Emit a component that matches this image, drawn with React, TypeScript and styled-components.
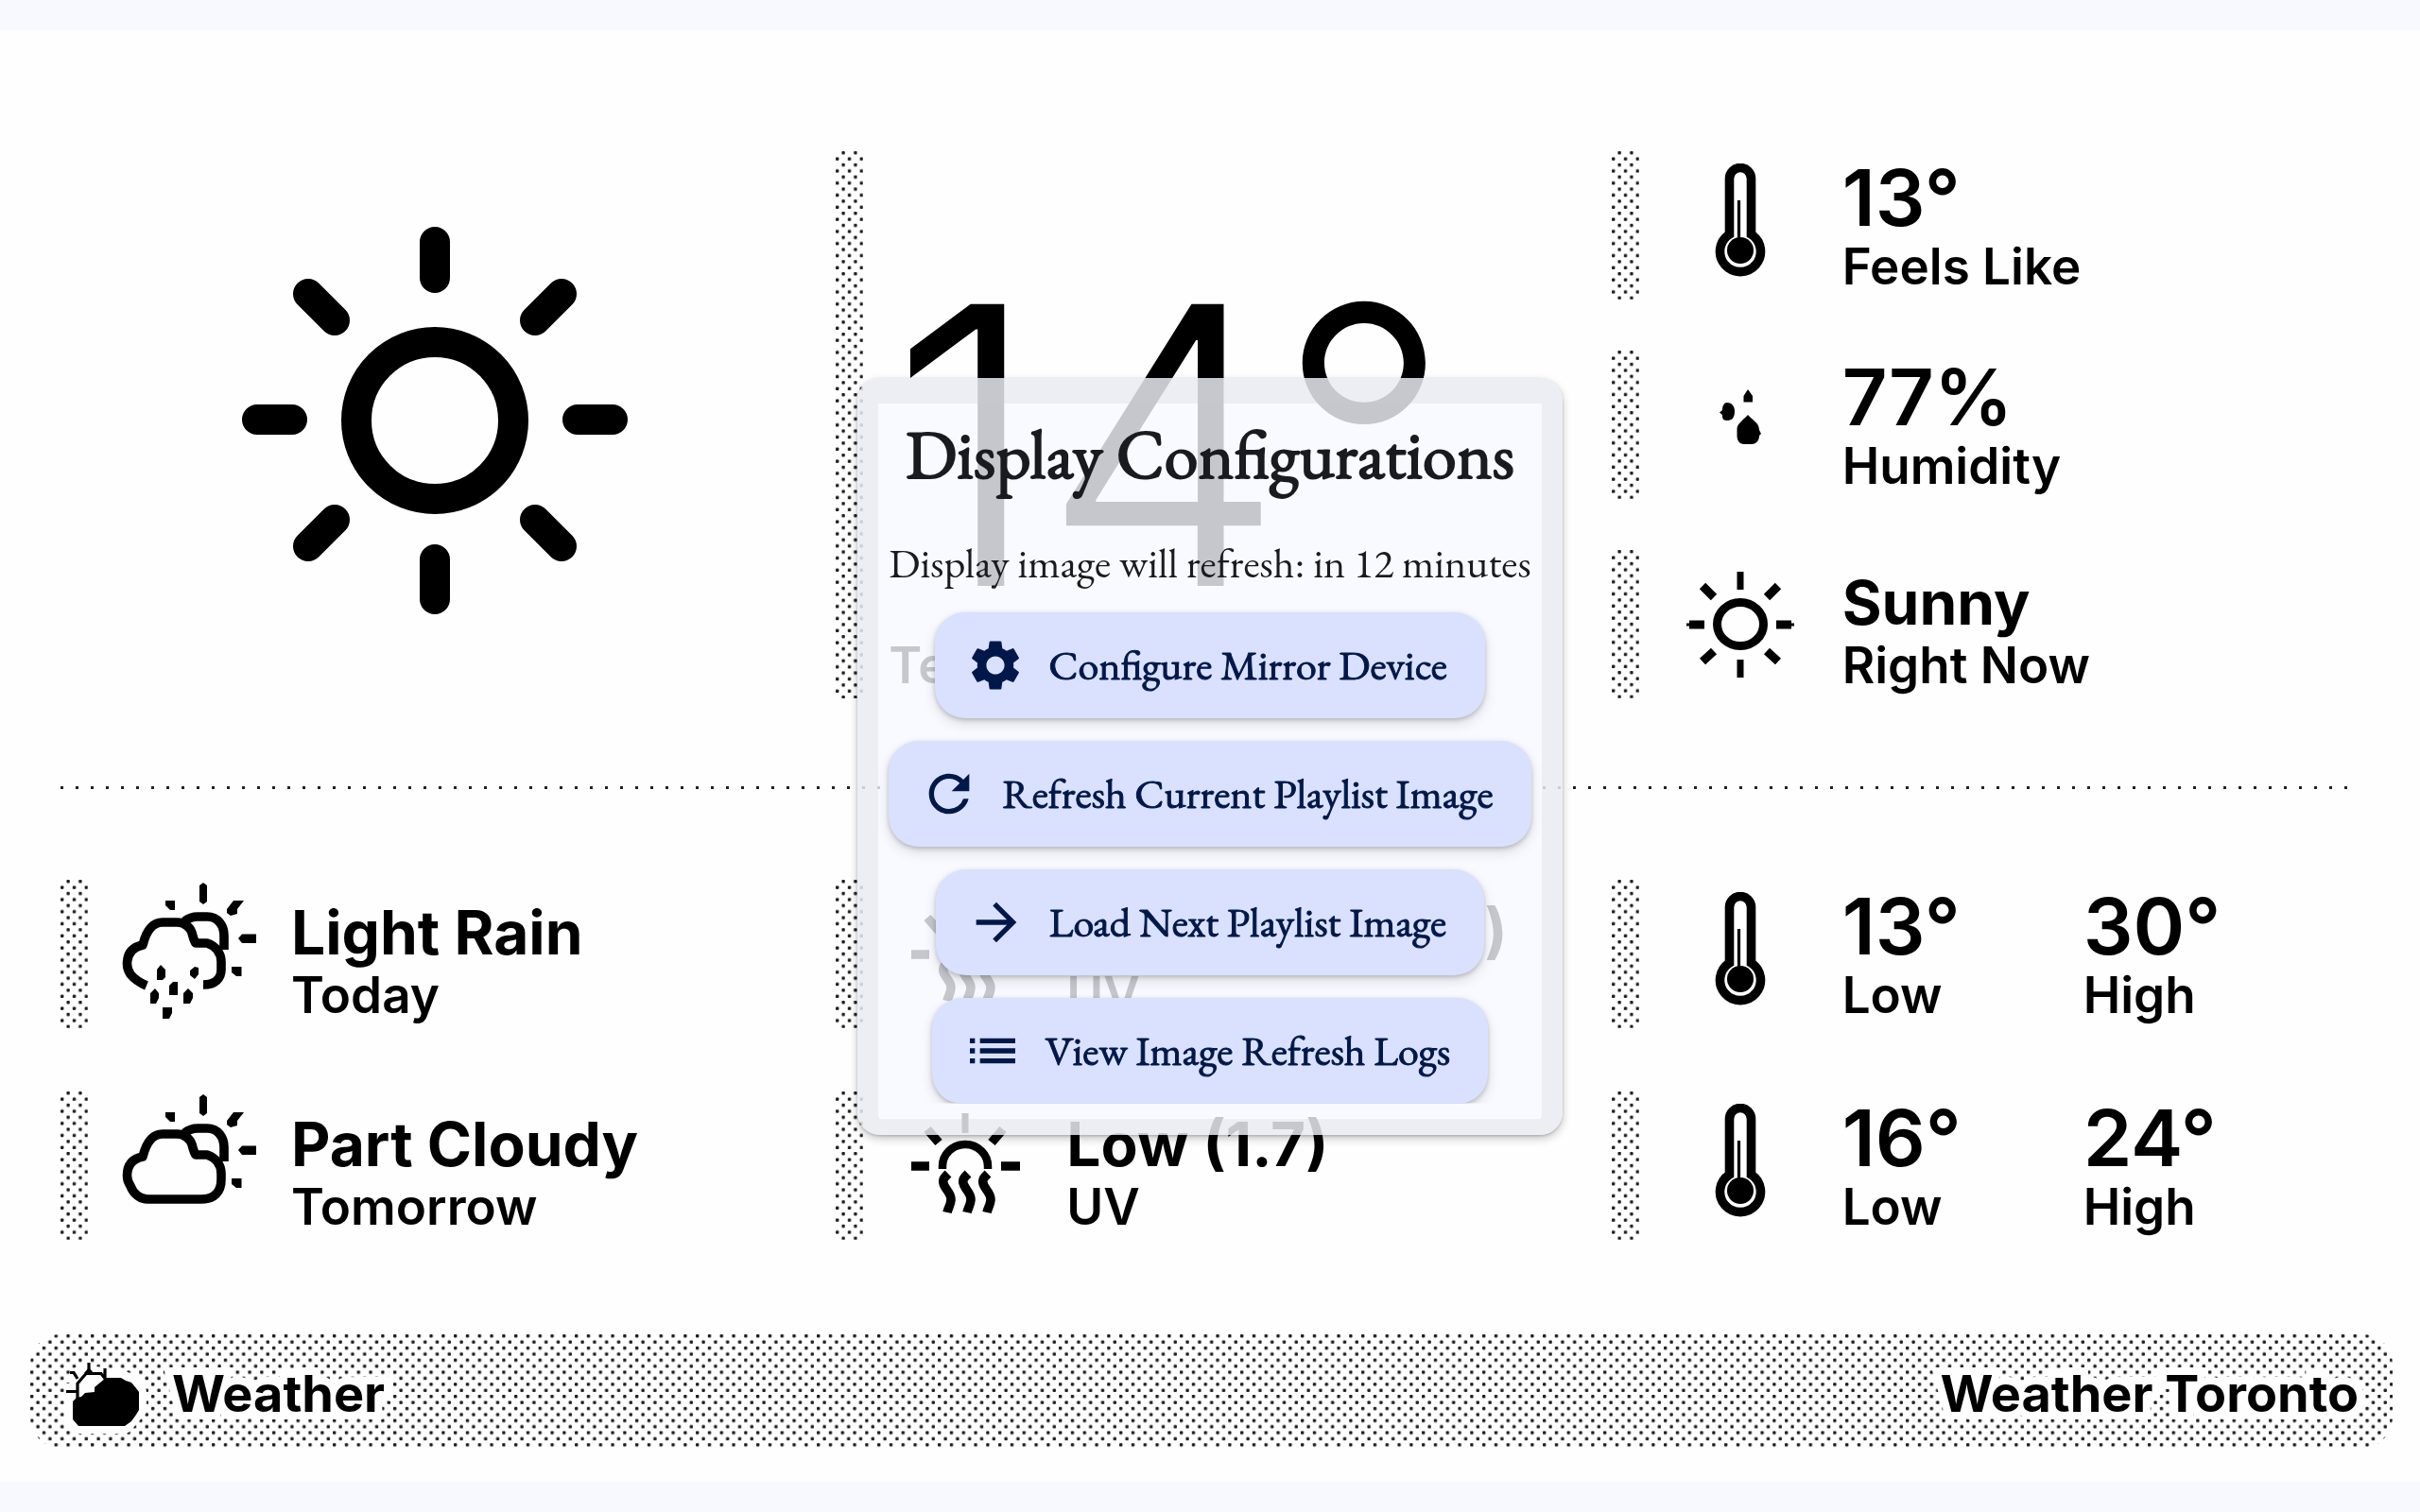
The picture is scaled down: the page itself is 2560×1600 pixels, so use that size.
import React, { useId } from "react";
import styled, { createGlobalStyle } from "styled-components";
import { MdSettings, MdRefresh, MdArrowForward, MdList } from "react-icons/md";

const GlobalStyle = createGlobalStyle`
  * { box-sizing: border-box; }
  body {
    margin: 0;
    background: #f8f9ff;
    color: #000;
    font-family: Inter, "Liberation Sans", sans-serif;
  }
`;

const Page = styled.div`
  min-height: 100vh;
  padding: 32px 0;
  display: flex;
  flex-direction: column;
`;

const Screen = styled.main`
  flex: 1;
  display: flex;
  flex-direction: column;
  padding: 128px 29px 36px 32px;
  background: #fefefe;
`;

const Columns = styled.section`
  display: grid;
  grid-template-columns: repeat(3, minmax(0, 1fr));
  column-gap: 29px;
  margin: 0 35px 0 32px;
`;

const Stack = styled.div<{ $gap: number }>`
  display: flex;
  flex-direction: column;
  gap: ${(p) => p.$gap}px;
`;

const Hero = styled.div`
  display: flex;
  align-items: center;
  justify-content: center;
  padding-bottom: 10px;
`;

const Item = styled.div`
  display: grid;
  grid-template-columns: 29px 215px 1fr;
  min-height: 157px;
`;

const BigItem = styled.div`
  display: grid;
  grid-template-columns: 29px 1fr;
  column-gap: 27px;
`;

const IconCell = styled.div`
  display: flex;
  align-items: center;
  justify-content: center;
`;

const Readings = styled.div`
  display: flex;
`;

const Reading = styled.div<{ $min?: number }>`
  display: flex;
  flex-direction: column;
  justify-content: flex-end;
  min-width: ${(p) => p.$min ?? 0}px;
  padding-bottom: 3px;
  white-space: nowrap;
`;

const Value = styled.span<{ $size: "medium" | "large" }>`
  font-size: ${(p) => (p.$size === "large" ? 83 : 64)}px;
  line-height: ${(p) => (p.$size === "large" ? 82 : 68)}px;
  font-weight: ${(p) => (p.$size === "large" ? 600 : 700)};
`;

const Temperature = styled.span`
  font-size: 410px;
  line-height: 402px;
  font-weight: 300;
`;

const Label = styled.span`
  font-size: 53px;
  line-height: 64px;
  font-weight: 600;
`;

const DottedRule = styled.hr`
  width: auto;
  height: 3px;
  margin: 93px 35px 96px 32px;
  border: 0;
  background: linear-gradient(90deg, #222 3px, transparent 3px) 0 0 / 16px 3px;
`;

const TitleBar = styled.footer`
  display: grid;
  grid-template-rows: 120px;
  margin-top: auto;
  border-radius: 32px;
  overflow: hidden;
  & > * { grid-area: 1 / 1; }
`;

const TitleContent = styled.div`
  display: flex;
  align-items: center;
  gap: 34px;
  padding: 6px 36px 0 38px;
`;

const Title = styled.span<{ $end?: boolean }>`
  margin-left: ${(p) => (p.$end ? "auto" : "0")};
  font-size: 54px;
  line-height: 64px;
  font-weight: 700;
  -webkit-text-stroke: 16px #fefefe;
  paint-order: stroke fill;
`;

const Texture = styled.svg`
  display: block;
  width: 100%;
  height: 100%;
  min-height: 0;
`;

const Overlay = styled.div`
  position: fixed;
  inset: 0;
  display: flex;
  align-items: center;
  justify-content: center;
`;

const Dialog = styled.div`
  display: flex;
  flex-direction: column;
  align-items: center;
  padding: 13px 11px 16px;
  border: solid rgba(234, 235, 241, 0.85);
  border-width: 27px 22px 17px;
  border-radius: 24px;
  background: rgba(248, 249, 255, 0.8);
  background-clip: padding-box;
  box-shadow: 0 4px 10px rgba(0, 0, 0, 0.22), 0 1px 3px rgba(0, 0, 0, 0.2);
  color: #1a1b20;
  font-family: "EB Garamond", "Liberation Serif", serif;
`;

const Heading = styled.h1`
  margin: 0;
  font-size: 72px;
  line-height: 80px;
  font-weight: 400;
  -webkit-text-stroke: 2px currentColor;
`;

const Notice = styled.p`
  margin: 47px 0 23px;
  font-size: 44px;
  line-height: 58px;
`;

const Actions = styled.div`
  display: flex;
  flex-direction: column;
  align-items: center;
  align-self: stretch;
  gap: 24px;
  clip-path: inset(-20px -20px 0);
`;

const ActionButton = styled.button`
  display: flex;
  align-items: center;
  gap: 24px;
  height: 112px;
  padding: 0 40px 0 32px;
  border: 0;
  border-radius: 32px;
  background: #dae1ff;
  color: #001849;
  font: inherit;
  font-size: 44px;
  line-height: 56px;
  white-space: nowrap;
  -webkit-text-stroke: 1px currentColor;
  box-shadow: 0 2px 5px rgba(0, 0, 0, 0.2), 0 6px 14px rgba(0, 0, 0, 0.12);
  cursor: pointer;
  & svg { stroke: none; }
`;

function Dither({ shifted = false }: { shifted?: boolean }) {
  const id = useId();
  const a = shifted ? 6.4 : 0;
  const b = shifted ? 0 : 6.4;
  return (
    <Texture aria-hidden="true">
      <defs>
        <pattern id={id} width="12.8" height="12.8" patternUnits="userSpaceOnUse">
          <rect x={a} y="0" width="3.400" height="3.400" rx="1" fill="#1c1c1c" />
          <rect x={b} y="6.400" width="3.400" height="3.400" rx="1" fill="#1c1c1c" />
        </pattern>
      </defs>
      <rect width="100%" height="100%" fill={`url(#${id})`} />
    </Texture>
  );
}

const SunLarge = () => (
  <svg width="410" height="410" viewBox="0 0 410 410" fill="none" stroke="#000" strokeWidth="32" strokeLinecap="round" aria-hidden="true">
    <circle cx="205" cy="205" r="83" />
    <path d="M205 16V54M205 352V394M17 204H54M356 204H393M71 71L99 99M339 71L311 99M71 338L99 310M339 338L311 310" />
  </svg>
);

const SunSmall = () => (
  <svg width="128" height="128" viewBox="0 0 128 128" fill="none" stroke="#000" strokeWidth="9" aria-hidden="true">
    <ellipse cx="64" cy="63.500" rx="24.500" ry="23" />
    <path d="M64 8V27M64 101V120" strokeWidth="7" />
    <path d="M10 64H26M102 64H118M24 23L36 35M104 23L92 35M24 103L36 92M104 103L92 92" />
    <path d="M7 64H12M116 64H121" strokeWidth="3" />
  </svg>
);

const Thermometer = () => (
  <svg width="64" height="132" viewBox="-6 0 64 132" aria-hidden="true">
    <path d="M14.500 75V16A11.500 11.500 0 0 1 37.500 16V75A21.500 21.500 0 1 1 14.500 75Z" fill="none" stroke="#000" strokeWidth="9.600" />
    <path d="M24.500 39V82" stroke="#000" strokeWidth="3.200" />
    <circle cx="26" cy="92" r="14" />
  </svg>
);

const Droplets = () => (
  <svg width="128" height="128" viewBox="0 0 128 128" aria-hidden="true">
    <path d="M72 26L77 33V39.500H67.500V33Z" />
    <path d="M50 40C55 40 58 44 58 49C58 55 56 59 50 59C45 59 45 56 45 53L42 50.500L45 48C45 43 47 40 50 40Z" />
    <path d="M72 53C76 58 84 61 84 69L86 73L84 75C84 81 80 84 76 84H68C63 84 60.500 80 60.500 75V68C60.500 62 68 58 72 53Z" />
  </svg>
);

const cloudLeft = "C7 94 5.500 91 5.500 86C5.500 74 12 68 22 66C25 54 31 42 43 42H58C66 42 72 47 74 53C75 57 76 61 78 64H90C99 67 105 74 105 84";

const CloudSun = ({ rain = false }: { rain?: boolean }) => (
  <svg width="144" height="152" viewBox="0 0 144 152" aria-hidden="true">
    <g fill="none" stroke="#000" strokeWidth="9.600" strokeLinejoin="round">
      <path d={rain ? `M26 109C19 106 13 102 9 97${cloudLeft}V92C105 101 99 108 86 108` : `M9 97${cloudLeft}V90C105 103 98 111 84 111H27C19 111 12 105 9 97Z`} />
      <path d="M66 41C70 38 74 36 80 36H90C102 36 108 46 108 56V71" />
    </g>
    <path d="M82 3L86 0L90 3V20L86 23L82 20Z" />
    <path d="M46 19H56V29H51L46 24Z" />
    <path d="M111 28L118 19H129L122 28V33L115 35L111 32Z" />
    <path d="M123 59L127 54.500H142V64H127Z" />
    <path d="M116 89H126.500V99H121L116 95Z" />
    {rain && (
      <path d="M37 92L41 87L46 92V100L43 103H37ZM72 93L77 89L81 90V97L77 102L72 98ZM50 109L54 105H59V119H50ZM30 117L35 112L39 117V122L36 128H30ZM65 117L70 112L75 117V122L72 128H65ZM43 132H53V138L50 144H43Z" />
    )}
  </svg>
);

const UvIcon = () => (
  <svg width="128" height="128" viewBox="0 0 128 128" fill="none" stroke="#000" strokeWidth="9.600" aria-hidden="true">
    <path d="M64 8V29" strokeWidth="7" />
    <path d="M24 25L36 39M104 25L92 39M7 64H26M102 64H122" />
    <path d="M40 67V64C40 52 50 41 64 41C78 41 88 52 88 64V67" strokeWidth="8.500" />
    <path d="M46 72C42 76 40 78 41 82C42 88 49 92 49 99C49 105 46 108 45 113M67 72C63 76 61 78 62 82C63 88 70 92 70 99C70 105 67 108 66 113M88 72C84 76 82 78 83 82C84 88 91 92 91 99C91 105 88 108 87 113" />
  </svg>
);

const WeatherBadge = () => (
  <svg width="78" height="67" viewBox="0 0 78 67" overflow="visible" aria-hidden="true">
    <path d="M7 41L12 21L21 11L40 13L58 16L72 21L77 31V50L62 67H13L7 60ZM24 0V10M4 11L12 18M41 6V16M0 30H12" fill="#fefefe" stroke="#fefefe" strokeWidth="16" strokeLinejoin="round" />
    <path d="M7 41L11 37L16 36L20 32L30 31V26L42 16H58L63 19L69 21L74 27L77 31V50L74 55L69 62L62 67H13L7 60Z" />
    <path d="M12 41V22L21 11.500H37L42 18M24 0V11M4 10.500H8L12 17M41 6V16M0 30.500H12" fill="none" stroke="#000" strokeWidth="3.200" />
    <path d="M19 11L24 5L29 11Z" />
  </svg>
);

type Entry = { value: string; label: string; size?: "medium" | "large" };

function Metric({ icon, entries }: { icon: React.ReactNode; entries: Entry[] }) {
  return (
    <Item>
      <Dither shifted />
      <IconCell>{icon}</IconCell>
      <Readings>
        {entries.map((e) => (
          <Reading key={e.label} $min={entries.length > 1 ? 255 : 0}>
            <Value $size={e.size ?? "medium"}>{e.value}</Value>
            <Label>{e.label}</Label>
          </Reading>
        ))}
      </Readings>
    </Item>
  );
}

const range = (low: string, high: string): Entry[] => [
  { value: low, label: "Low", size: "large" },
  { value: high, label: "High", size: "large" },
];

const actions = [
  { text: "Configure Mirror Device", Icon: MdSettings },
  { text: "Refresh Current Playlist Image", Icon: MdRefresh },
  { text: "Load Next Playlist Image", Icon: MdArrowForward },
  { text: "View Image Refresh Logs", Icon: MdList },
];

export default function App() {
  return (
    <>
      <GlobalStyle />
      <Page>
        <Screen>
          <Columns>
            <Hero>
              <SunLarge />
            </Hero>
            <BigItem>
              <Dither shifted />
              <Reading>
                <Temperature>14°</Temperature>
                <Label>Temperature</Label>
              </Reading>
            </BigItem>
            <Stack $gap={54}>
              <Metric icon={<Thermometer />} entries={[{ value: "13°", label: "Feels Like", size: "large" }]} />
              <Metric icon={<Droplets />} entries={[{ value: "77%", label: "Humidity", size: "large" }]} />
              <Metric icon={<SunSmall />} entries={[{ value: "Sunny", label: "Right Now" }]} />
            </Stack>
          </Columns>
          <DottedRule />
          <Columns>
            <Stack $gap={67}>
              <Metric icon={<CloudSun rain />} entries={[{ value: "Light Rain", label: "Today" }]} />
              <Metric icon={<CloudSun />} entries={[{ value: "Part Cloudy", label: "Tomorrow" }]} />
            </Stack>
            <Stack $gap={67}>
              <Metric icon={<UvIcon />} entries={[{ value: "Moderate (6.0)", label: "UV" }]} />
              <Metric icon={<UvIcon />} entries={[{ value: "Low (1.7)", label: "UV" }]} />
            </Stack>
            <Stack $gap={67}>
              <Metric icon={<Thermometer />} entries={range("13°", "30°")} />
              <Metric icon={<Thermometer />} entries={range("16°", "24°")} />
            </Stack>
          </Columns>
          <TitleBar>
            <Dither />
            <TitleContent>
              <WeatherBadge />
              <Title>Weather</Title>
              <Title $end>Weather Toronto</Title>
            </TitleContent>
          </TitleBar>
        </Screen>
      </Page>
      <Overlay>
        <Dialog role="dialog" aria-labelledby="dialog-title">
          <Heading id="dialog-title">Display Configurations</Heading>
          <Notice>Display image will refresh: in 12 minutes</Notice>
          <Actions>
            {actions.map(({ text, Icon }) => (
              <ActionButton key={text} type="button">
                <Icon size={64} />
                {text}
              </ActionButton>
            ))}
          </Actions>
        </Dialog>
      </Overlay>
    </>
  );
}
